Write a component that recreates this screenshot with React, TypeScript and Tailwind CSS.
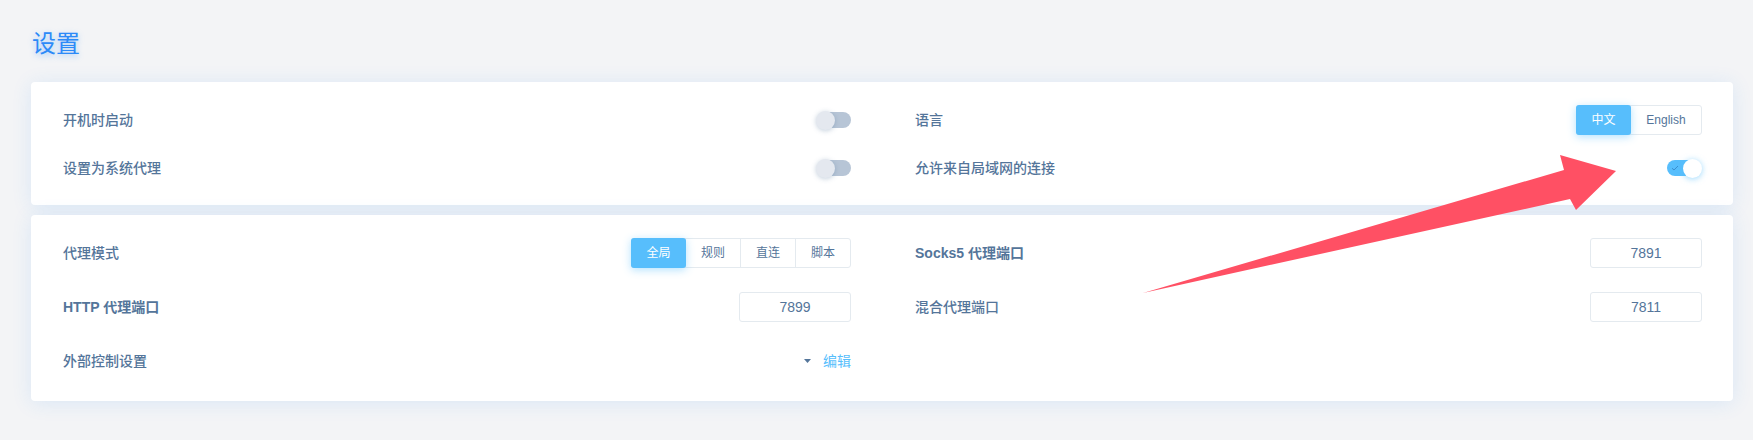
import React from "react";

const FONT = '"Liberation Sans", "Noto Sans CJK SC", Arial, sans-serif';

function ToggleOff() {
  return (
    <div className="relative w-[35px] h-[19px]">
      <div className="absolute left-[4px] right-0 top-[1.5px] h-[16px] rounded-full bg-[#b7c5d6]" />
      <div className="absolute left-0 top-0 w-[19px] h-[19px] rounded-full bg-[#e4e8ef] shadow-[0_1px_5px_rgba(84,117,154,0.35)]" />
    </div>
  );
}

function ToggleOn() {
  return (
    <div className="relative w-[35px] h-[19px]">
      <div className="absolute left-0 w-[31px] top-[1.5px] h-[16px] rounded-full bg-[#57befc]">
        <svg className="absolute left-[4px] top-[4px]" width="8" height="8" viewBox="0 0 8 8">
          <path d="M1 4.2 L3 6 L7 2" fill="none" stroke="#3a8fd0" strokeWidth="1" />
        </svg>
      </div>
      <div className="absolute right-0 top-0 w-[19px] h-[19px] rounded-full bg-white shadow-[0_1px_6px_rgba(87,190,252,0.6)]" />
    </div>
  );
}

function Segmented({ items, active, widths }: { items: string[]; active: number; widths: number[] }) {
  return (
    <div className="flex h-[30px] rounded-[3px] border border-[#e4eaef] text-[12px]">
      {items.map((it, i) => (
        <div
          key={it}
          style={{ width: widths[i] }}
          className={
            i === active
              ? "flex items-center justify-center -m-px h-[30px] rounded-[3px] bg-[#57befc] text-white shadow-[0_2px_8px_rgba(87,190,252,0.45)] relative"
              : "flex items-center justify-center text-[#54759a] border-l border-[#e4eaef] first:border-l-0"
          }
        >
          {it}
        </div>
      ))}
    </div>
  );
}

function PortInput({ value }: { value: string }) {
  return (
    <div className="w-[112px] h-[30px] rounded-[3px] border border-[#e4eaef] flex items-center justify-center text-[14px] text-[#54759a]">
      {value}
    </div>
  );
}

function Row({ label, bold, children, h }: { label?: string; bold?: boolean; children?: React.ReactNode; h: string }) {
  return (
    <div className={`flex items-center justify-between ${h}`}>
      <span className={`text-[14px] text-[#54759a] ${bold ? "font-bold" : "font-medium"}`}>{label}</span>
      {children}
    </div>
  );
}

export default function App() {
  return (
    <div className="relative w-full min-h-[440px] bg-[#f3f4f6] pb-[39px]" style={{ fontFamily: FONT }}>
      <div className="pt-[29px] pl-[32px] text-[24px] leading-[30px] text-[#2c8af8] [text-shadow:0_2px_6px_rgba(44,138,248,0.4)]">
        设置
      </div>

      <div className="mt-[23px] ml-[31px] mr-[20px] bg-white rounded-[4px] shadow-[0_2px_20px_rgba(44,138,248,0.12)] pl-[32px] pr-[31px] pt-[14px] pb-[13px]">
        <div className="grid grid-cols-[788px_787px] gap-x-[64px]">
          <Row label="开机时启动" h="h-[48px]">
            <ToggleOff />
          </Row>
          <Row label="语言" h="h-[48px]">
            <Segmented items={["中文", "English"]} active={0} widths={[55, 71]} />
          </Row>
          <Row label="设置为系统代理" h="h-[48px]">
            <ToggleOff />
          </Row>
          <Row label="允许来自局域网的连接" h="h-[48px]">
            <ToggleOn />
          </Row>
        </div>
      </div>

      <div className="mt-[10px] ml-[31px] mr-[20px] bg-white rounded-[4px] shadow-[0_2px_20px_rgba(44,138,248,0.12)] pl-[32px] pr-[31px] pt-[11px] pb-[13px]">
        <div className="grid grid-cols-[788px_787px] gap-x-[64px]">
          <Row label="代理模式" h="h-[54px]">
            <Segmented items={["全局", "规则", "直连", "脚本"]} active={0} widths={[55, 55, 55, 55]} />
          </Row>
          <Row label="Socks5 代理端口" bold h="h-[54px]">
            <PortInput value="7891" />
          </Row>
          <Row label="HTTP 代理端口" bold h="h-[54px]">
            <PortInput value="7899" />
          </Row>
          <Row label="混合代理端口" h="h-[54px]">
            <PortInput value="7811" />
          </Row>
          <Row label="外部控制设置" h="h-[54px]">
            <div className="flex items-center gap-[12px]">
              <svg width="7" height="4" viewBox="0 0 7 4">
                <path d="M0 0 L7 0 L3.5 4 Z" fill="#54759a" />
              </svg>
              <span className="text-[14px] text-[#57befc]">编辑</span>
            </div>
          </Row>
          <div />
        </div>
      </div>

      <svg
        className="absolute left-0 top-0 pointer-events-none"
        width="1753"
        height="440"
        viewBox="0 0 1753 440"
      >
        <polygon
          points="1143,293 1564,170 1560,155 1616,171 1576,210 1570,199"
          fill="#ff5064"
        />
      </svg>
    </div>
  );
}
